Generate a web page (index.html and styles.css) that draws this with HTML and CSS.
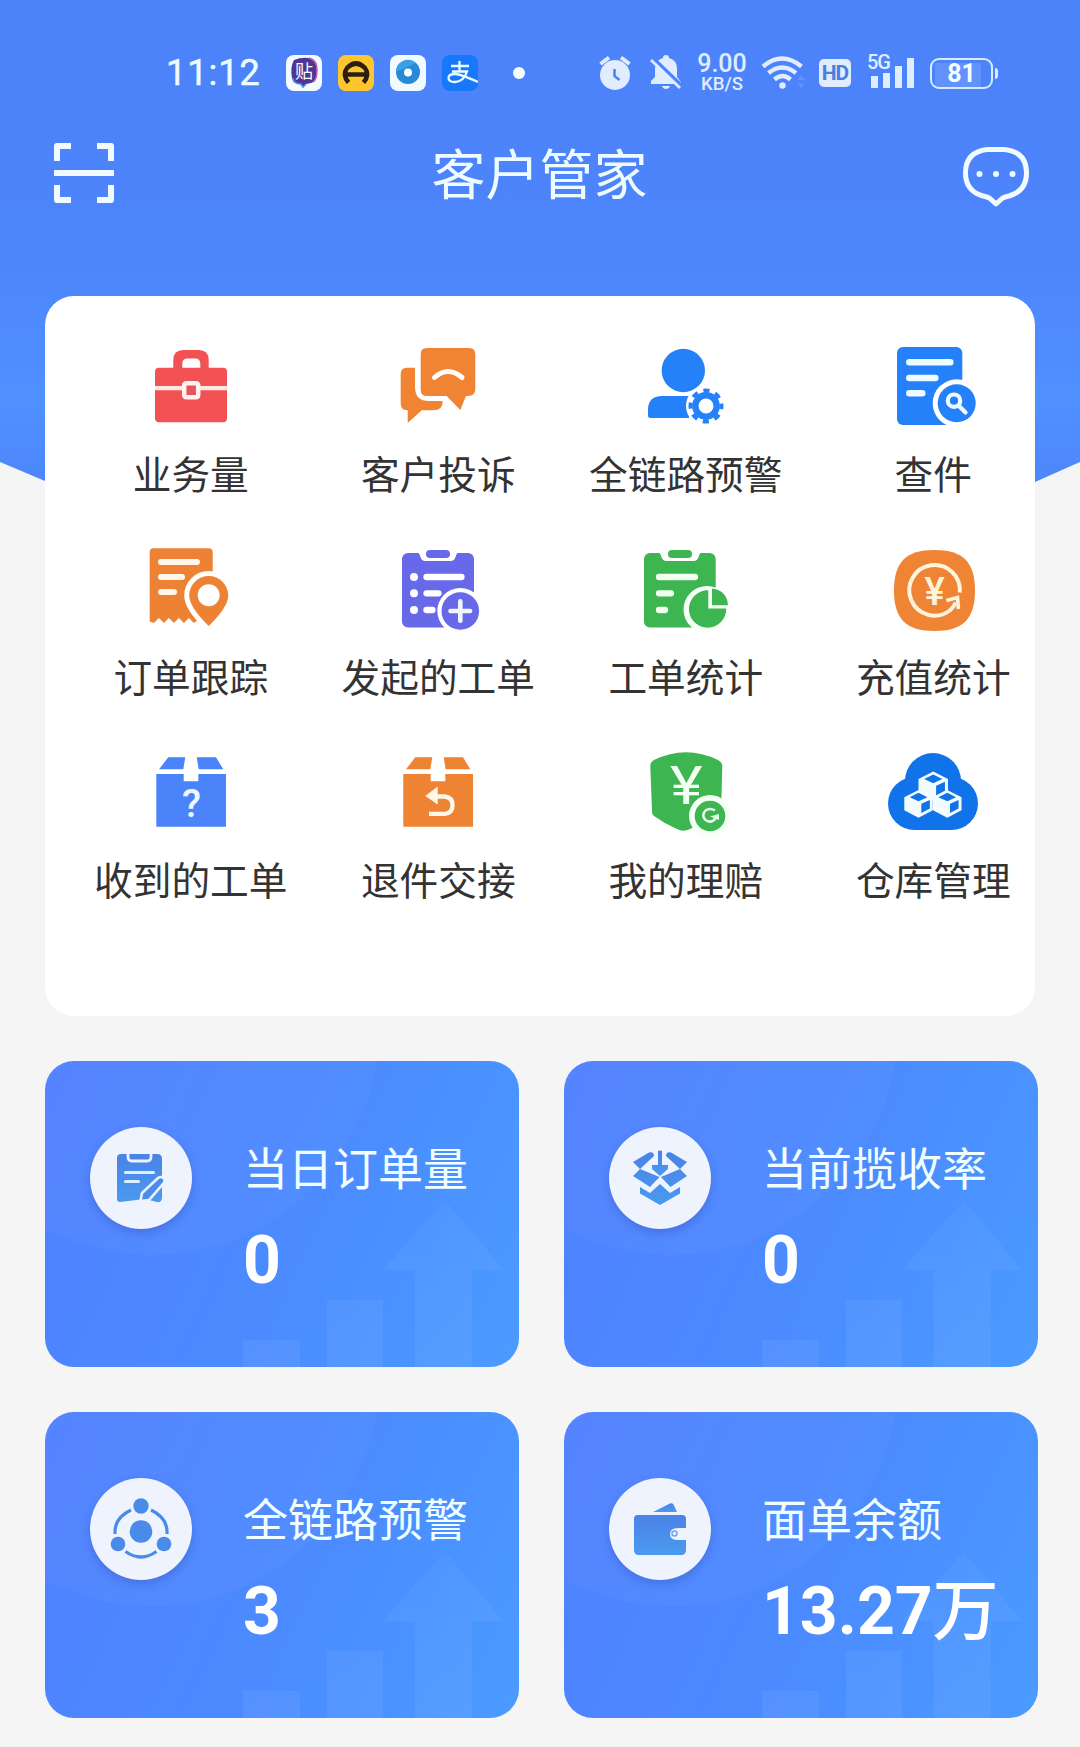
FILE: index.html
```html
<!DOCTYPE html>
<html lang="zh-CN">
<head>
    <meta charset="UTF-8">
    <meta name="viewport" content="width=device-width, initial-scale=1.0">
    <title>客户管家</title>
    <link rel="stylesheet" href="styles.css">
</head>
<body>
    <!-- shared shapes -->
    <svg class="defs" width="0" height="0">
        <defs>
            <linearGradient id="iconBlue" x1="0" y1="0" x2="0" y2="1">
                <stop offset="0" stop-color="#4b82e6"/>
                <stop offset="1" stop-color="#4a9af0"/>
            </linearGradient>
            <linearGradient id="barFade" gradientUnits="userSpaceOnUse" x1="0" y1="130" x2="0" y2="306">
                <stop offset="0" stop-color="#fff" stop-opacity="0.03"/>
                <stop offset="1" stop-color="#fff" stop-opacity="0.06"/>
            </linearGradient>
            <symbol id="card-bg" viewBox="0 0 474 306">
                <circle cx="107" cy="-33" r="227" fill="#fff" opacity="0.03"/>
                <path d="M198 306v-27h57v27zM282 306v-67h56v67zM370 306v-97h-32l62-70 58 70h-31v97z" fill="url(#barFade)"/>
            </symbol>
            <symbol id="cube" viewBox="0 0 30 30">
                <path d="M15 0.5 29.5 7.8v13.4L15 28.8 0.5 21.2V7.8z" fill="#f2fcff"/>
                <path d="M15 3.4 24 7.9 15 12 6 7.9zM17.8 14.6 26.5 10.6v8.8l-8.7 4.6z" fill="#1173e9"/>
            </symbol>
        </defs>
    </svg>

    <header class="hero">
        <div class="status-bar">
            <span class="time">11:12</span>
            <div class="apps">
                <svg width="36" height="36" viewBox="0 0 36 36">
                    <rect width="36" height="36" rx="8" fill="#f4fbff"/>
                    <path d="M8 5q10-4 18-1 6 3 5 12 0 10-6 12l-5 1-3 3-3-3q-7 0-8-6-2-11 2-18z" fill="#4d3696"/>
                    <path d="M23 3q8 2 8 12t-4 12" fill="none" stroke="#c25bb5" stroke-width="1.5"/>
                    <path d="M7 23q1 6 8 6l2 3 3-3" fill="none" stroke="#4b8be0" stroke-width="1.5"/>
                    <text x="18" y="23" class="tie">贴</text>
                </svg>
                <svg width="36" height="36" viewBox="0 0 36 36">
                    <rect width="36" height="36" rx="8" fill="#fdc62f"/>
                    <path d="M10.500 27.500Q4 20 9 13q9-9 18 0 5 7-1.500 14.500M8 19.500h20" fill="none" stroke="#2b2010" stroke-width="4.500"/>
                </svg>
                <svg width="36" height="36" viewBox="0 0 36 36">
                    <rect width="36" height="36" rx="8" fill="#f1fbff"/>
                    <circle cx="18" cy="17" r="12" fill="#2789d8"/>
                    <path d="M6 17a12 12 0 0 1 20-9z" fill="#39a0e3"/>
                    <circle cx="18" cy="17.500" r="4" fill="#fff"/>
                </svg>
                <svg width="36" height="36" viewBox="0 0 36 36">
                    <rect width="36" height="36" rx="8" fill="#1778fb"/>
                    <path d="M9 11h18M17.500 6v11M10 16.500h15q-3 10-12 10.500-6.500 0-6.500-4t6.500-4q5 0 23 8" fill="none" stroke="#eafcff" stroke-width="2.300"/>
                </svg>
            </div>
            <i class="dot"></i>
            <div class="system">
                <svg class="alarm" width="34" height="36" viewBox="0 0 34 36">
                    <circle cx="17" cy="20" r="15" fill="#e0edff"/>
                    <path d="M2.500 9 11 2.500M31.500 9 23 2.500" stroke="#e0edff" stroke-width="4"/>
                    <path d="M16.500 14v7l5 4" fill="none" stroke="#4c84fa" stroke-width="2.600"/>
                </svg>
                <svg class="bell" width="32" height="36" viewBox="0 0 32 36">
                    <path d="M13 3a3 3 0 0 1 6 0q8 2 8 11v8l4 5v2H1v-3l4-4v-8q0-9 8-11z" fill="#e0edff"/>
                    <path d="M12 31h8q-1 3-4 3t-4-3z" fill="#e0edff"/>
                    <path d="M3 3 31 30" stroke="#4c84fa" stroke-width="3.500"/>
                    <path d="M1 5 30 33" stroke="#e0edff" stroke-width="2.800"/>
                </svg>
                <div class="speed"><b>9.00</b><span>KB/S</span></div>
                <svg class="wifi" width="46" height="36" viewBox="0 0 46 36">
                    <path d="M2 11.500q19-16 38.500 0M7.500 18q13.500-11 27.500 0M13.500 24.500q8-7 16 0" fill="none" stroke="#e0edff" stroke-width="4.500"/>
                    <circle cx="21.500" cy="30.500" r="3.200" fill="#e0edff"/>
                    <path d="m36 25 4-4.500 4 4.500zM36 28.500l4 4.500 4-4.500z" fill="#6392fb"/>
                </svg>
                <span class="hd">HD</span>
                <div class="signal">
                    <svg width="48" height="34" viewBox="0 0 48 34">
                        <path d="M3 20h7v12H3zM15 17h7v15h-7zM27 10h7v22h-7zM39 2h7v30h-7z" fill="#e0edff"/>
                    </svg>
                    <span>5G</span>
                </div>
                <div class="battery"><span>81</span></div>
            </div>
        </div>

        <nav class="title-bar">
            <svg width="60" height="60" viewBox="0 0 60 60" fill="none" stroke="#f1fbff" stroke-width="6" stroke-linejoin="round">
                <path d="M3 18V3h14M43 3h14v15M57 42v15H43M17 57H3V42"/>
                <path d="M1 30h58" stroke-linecap="round"/>
            </svg>
            <h1>客户管家</h1>
            <svg class="chat" width="68" height="60" viewBox="0 0 68 60">
                <path d="M25 2.500H43Q64.500 5 64.500 26 64.500 44 47 49 42 50 40 51.500L34 57 28 51.500Q26 50 21 49 3.500 44 3.500 26 3.500 5 25 2.500z" fill="none" stroke="#f1fbff" stroke-width="5" stroke-linejoin="round"/>
                <g fill="#f1fbff"><circle cx="17.500" cy="27" r="3"/><circle cx="34" cy="27" r="3"/><circle cx="50.500" cy="27" r="3"/></g>
            </svg>
        </nav>
    </header>

    <main>
        <section class="menu">
            <a class="item">
                <svg viewBox="0 0 90 90">
                    <path d="M27.300 27V19q0-10 10-10h15.400q10 0 10 10v8h-8.400v-4q0-5.500-5-5.500h-8q-5 0-5 5.500v4z" fill="#f25253"/>
                    <rect x="9" y="26.700" width="72" height="54.500" rx="4" fill="#f25253"/>
                    <path d="M9 47.200h72" stroke="#ffe8e4" stroke-width="4.300"/>
                    <rect x="38.200" y="42.300" width="14" height="14" rx="2" fill="#e9535c" stroke="#fff3ef" stroke-width="4.500"/>
                </svg>
                <span>业务量</span>
            </a>
            <a class="item">
                <svg viewBox="0 0 90 90" fill="#f08433">
                    <path d="M14 26.700h8V46q0 14 14 14h13.700q0 9.300-9 9.300H28.700L14.700 82V69.300q-7 0-7-7V33q0-6.300 6.300-6.300z"/>
                    <path d="M34 7h42q6.300 0 6.300 6.300V48q0 7-7 7H73l-5.700 14L53.700 55H34q-6.300 0-6.300-6.300V13.300Q27.700 7 34 7z"/>
                    <path d="M41.500 36.500q13.500-12 27.500 0" fill="none" stroke="#fff" stroke-width="5" stroke-linecap="round"/>
                </svg>
                <span>客户投诉</span>
            </a>
            <a class="item">
                <svg viewBox="0 0 90 90" fill="#2581fa">
                    <circle cx="42.300" cy="29.500" r="21.700"/>
                    <path d="M21 55h27v22H9.500Q7 77 7 74.500V69q0-14 14-14z"/>
                    <circle cx="65" cy="65" r="20" fill="#fff"/>
                    <circle cx="65" cy="65" r="10.700" fill="none" stroke="#2581fa" stroke-width="6.400"/>
                    <circle cx="65" cy="65" r="15.500" fill="none" stroke="#2581fa" stroke-width="4" stroke-dasharray="6.200 5.970" stroke-dashoffset="3.100"/>
                </svg>
                <span>全链路预警</span>
            </a>
            <a class="item">
                <svg viewBox="0 0 90 90">
                    <rect x="9" y="6" width="65.300" height="78" rx="6" fill="#2581fa"/>
                    <path d="M21.300 21.300h41M21.300 37h26M21.300 52.300h13" stroke="#effcff" stroke-width="6.500" stroke-linecap="round"/>
                    <circle cx="68.700" cy="62.300" r="24" fill="#fff"/>
                    <circle cx="68.700" cy="62.300" r="19" fill="#2581fa"/>
                    <circle cx="66" cy="59.700" r="6.200" fill="none" stroke="#effcff" stroke-width="4.200"/>
                    <path d="m71 65 6.500 6.500" stroke="#effcff" stroke-width="4.300" stroke-linecap="round"/>
                </svg>
                <span>查件</span>
            </a>

            <a class="item">
                <svg viewBox="0 0 90 90">
                    <path d="M8.700 4.300h54q4 0 4 4V79h-10l-4-3.500-4.800 3.500-5-5-5 5-5-5-5 5-5-5-5 5-5-5-5 5-4.200-1.500V8.300q0-4 4-4z" fill="#ed8234"/>
                    <path d="M15 18h36M15 33h21M15 48h13" stroke="#fff8ea" stroke-width="6" stroke-linecap="round"/>
                    <path d="M62.700 82Q43.200 63 43.200 51.500a19.500 19.500 0 0 1 39 0Q82.200 63 62.700 82z" fill="#fff" stroke="#fff" stroke-width="10"/>
                    <path d="M62.700 82Q43.200 63 43.200 51.500a19.500 19.500 0 0 1 39 0Q82.200 63 62.700 82z" fill="#ed8234"/>
                    <circle cx="62.700" cy="51.300" r="11" fill="#fff"/>
                </svg>
                <span>订单跟踪</span>
            </a>
            <a class="item">
                <svg viewBox="0 0 90 90">
                    <rect x="9" y="9" width="72" height="74.500" rx="6" fill="#6869e9"/>
                    <path d="M25 8h40q-2 3-2.500 5-1 4-5 4h-25q-4 0-5-4-.5-2-2.500-5z" fill="#fff"/>
                    <rect x="33" y="6" width="24" height="8" rx="4" fill="#6869e9"/>
                    <path d="M33.500 33h35M33.500 49.300h12M33.500 66h6" stroke="#fff" stroke-width="6.300" stroke-linecap="round"/>
                    <g fill="#fff"><circle cx="21" cy="33" r="4"/><circle cx="21" cy="49.300" r="4"/><circle cx="21" cy="66" r="4"/></g>
                    <circle cx="67.300" cy="67" r="23" fill="#fff"/>
                    <circle cx="67.300" cy="67" r="18.800" fill="#6869e9"/>
                    <path d="M57.500 67h19.600M67.300 57.200v19.600" stroke="#f4f4ff" stroke-width="4.600" stroke-linecap="round"/>
                </svg>
                <span>发起的工单</span>
            </a>
            <a class="item">
                <svg viewBox="0 0 90 90">
                    <rect x="3" y="9" width="71.700" height="74.500" rx="6" fill="#3db551"/>
                    <path d="M18 8h42q-2 3-2.500 5-1 4-5 4H25.500q-4 0-5-4-.5-2-2.500-5z" fill="#fff"/>
                    <rect x="27" y="6" width="24" height="8" rx="4" fill="#3db551"/>
                    <path d="M18 33h36M18 49.300h12M18 66h6" stroke="#f0fff0" stroke-width="6.300" stroke-linecap="round"/>
                    <circle cx="66" cy="65.500" r="23.500" fill="#f8fff8"/>
                    <path d="M67.300 46.300V64.600H85.300A18.700 18.700 0 1 1 67.300 46.300z" fill="#3db551"/>
                    <path d="M71 44.500q15 2 16 16.800H71z" fill="#3db551"/>
                </svg>
                <span>工单统计</span>
            </a>
            <a class="item">
                <svg viewBox="0 0 90 90">
                    <path d="M46.500 6C75 6 87 18 87 46.500S75 87 46.500 87 6 75 6 46.500 18 6 46.500 6z" fill="#ef8435"/>
                    <path d="M71.800 48.500a25.300 25.300 0 1 0-10 18q4-3.500 6-8" fill="none" stroke="#fff3dc" stroke-width="4"/>
                    <path d="M58.500 56.500 69.500 53.500 70.500 65" fill="none" stroke="#fff3dc" stroke-width="3.600"/>
                    <text transform="translate(46.500 60.500)" class="yen small">¥</text>
                </svg>
                <span>充值统计</span>
            </a>

            <a class="item">
                <svg viewBox="0 0 90 90" fill="#4b84fa">
                    <path d="M22.300 10.300h17l-2 12H13zM50.700 10.300H70l7.300 12H52.700zM10.300 27h27.400v7.300h14.600V27H80v52.700H10.300z"/>
                    <text x="45.500" y="70" class="question">?</text>
                </svg>
                <span>收到的工单</span>
            </a>
            <a class="item">
                <svg viewBox="0 0 90 90" fill="#ee8334">
                    <path d="M22.300 10.300h17l-2 12H13zM50.700 10.300H70l7.300 12H52.700zM10.300 27h27.400v7.300h14.600V27H80v52.700H10.300z"/>
                    <path d="M32.300 49 44.700 39.500v18z" fill="#fff7ea"/>
                    <path d="M43 49.500h9q7.500 1 7.500 8.800t-7.500 8.500H36" fill="none" stroke="#fff7ea" stroke-width="4.300"/>
                </svg>
                <span>退件交接</span>
            </a>
            <a class="item">
                <svg viewBox="0 0 90 90">
                    <path d="M13 13Q45-2.500 77 13q4.500 2.500 4.300 6L80 66q-6 5-31 16-7 3.500-13 0Q24 77 13 69q-2-1-2-5L9.300 19q0-4 3.700-6z" fill="#3db551"/>
                    <circle cx="69" cy="69" r="21" fill="#f6fff6"/>
                    <circle cx="69" cy="69" r="15.300" fill="#3db551"/>
                    <path d="M74 63.500q-5-3-9.500 0-4.500 5 0 9.500 6 4 10.500-2" fill="none" stroke="#e4ffe8" stroke-width="2.500"/>
                    <path d="M69 69.500 78 67v6z" fill="#e4ffe8"/>
                    <text transform="translate(45.300 57) scale(1.150 1)" class="yen">¥</text>
                </svg>
                <span>我的理赔</span>
            </a>
            <a class="item">
                <svg viewBox="0 0 90 90">
                    <g fill="#1173e9">
                        <circle cx="45" cy="34" r="28"/>
                        <circle cx="26.500" cy="56.500" r="26.500"/>
                        <circle cx="63.500" cy="56.500" r="26.500"/>
                        <rect x="26" y="50" width="38" height="33"/>
                    </g>
                    <use href="#cube" x="30" y="24" width="30.500" height="30.500"/>
                    <use href="#cube" x="15.800" y="42.500" width="29.500" height="29.500"/>
                    <use href="#cube" x="44.500" y="42.500" width="29.500" height="29.500"/>
                </svg>
                <span>仓库管理</span>
            </a>
        </section>

        <section class="stats">
            <div class="card">
                <svg class="deco"><use href="#card-bg"/></svg>
                <div class="badge">
                    <svg viewBox="0 0 102 102">
                        <path d="M31 27h36q5 0 5 5v38q0 6-5 5l-12-3-25 3q-3 0-3-3V31q0-4 4-4z" fill="url(#iconBlue)"/>
                        <path d="M38 25v5q0 4 4 4h15q4 0 4-4v-5" fill="none" stroke="#edf2ff" stroke-width="2.800"/>
                        <path d="M35.500 45.500h28M35.500 54.500h13" stroke="#d9f0ff" stroke-width="3.200" stroke-linecap="round"/>
                        <path d="m52 66 16-15q3-2 5.500 0 2.500 3 0 5.500L59 73l-8.500 1z" fill="#4a8eeb" stroke="#edf2ff" stroke-width="2.600"/>
                    </svg>
                </div>
                <div class="info"><h2>当日订单量</h2><strong>0</strong></div>
            </div>
            <div class="card">
                <svg class="deco"><use href="#card-bg"/></svg>
                <div class="badge">
                    <svg viewBox="0 0 102 102" fill="url(#iconBlue)">
                        <path d="M24 35 40 25.500Q45 24 45 29L31 42zM78 35 62 25.500Q57 24 57 29l14 13zM31 42l-7 7 17 11 9.500-10zM71 42l7 7-16.500 11L52 50zM31 60l10 6 10-9 10 9 10-6v6.500L51 78 31 66.500z"/>
                        <path d="M49 24q2-1 4 0v14h6v4l-8 7-8-7v-4h6z"/>
                    </svg>
                </div>
                <div class="info"><h2>当前揽收率</h2><strong>0</strong></div>
            </div>
            <div class="card">
                <svg class="deco"><use href="#card-bg"/></svg>
                <div class="badge">
                    <svg viewBox="0 0 102 102">
                        <g fill="#4a8bea"><circle cx="51" cy="28" r="7.700"/><circle cx="51" cy="53.500" r="11.300"/><circle cx="28" cy="66" r="7.300"/><circle cx="74" cy="66" r="7.300"/></g>
                        <path d="M41 32Q24 40 25 56M61 32Q78 40 77 56M35.500 73.500q15.500 11 31 0" fill="none" stroke="#4a8bea" stroke-width="3.200"/>
                    </svg>
                </div>
                <div class="info"><h2>全链路预警</h2><strong>3</strong></div>
            </div>
            <div class="card">
                <svg class="deco"><use href="#card-bg"/></svg>
                <div class="badge">
                    <svg viewBox="0 0 102 102" fill="url(#iconBlue)">
                        <path d="M44 34 61 25.500q3-1 4 2L68 34z"/>
                        <path d="M29 37h44q4 0 4 4v9h-8q-8 0-8 6t8 6h8v10q0 5-5 5H30q-5 0-5-5V41q0-4 4-4z"/>
                        <circle cx="65.500" cy="55.500" r="2.500" fill="none" stroke="#6fa5ef" stroke-width="1.500"/>
                    </svg>
                </div>
                <div class="info"><h2>面单余额</h2><strong>13.27<em>万</em></strong></div>
            </div>
        </section>
    </main>
</body>
</html>
```

FILE: styles.css
```css
* {
    box-sizing: border-box;
}

body {
    margin: 0;
    width: 1080px;
    height: 1747px;
    overflow: hidden;
    background: #f5f5f6;
    color: #333;
    font-family: Roboto, "Noto Sans CJK SC", sans-serif;
}

svg {
    display: block;
    flex-shrink: 0;
}

.defs {
    position: absolute;
}

/* header */
.hero {
    height: 540px;
    padding-top: 50px;
    background: linear-gradient(#4c83fb 0, #4c84fb 240px, #5090ff 400px, #4d87fb 480px);
    clip-path: polygon(0 0, 100% 0, 100% 462px, 1035px 482px, 540px 540px, 45px 481px, 0 462px);
}

.status-bar {
    display: flex;
    align-items: center;
    height: 46px;
    padding: 0 83px 0 166px;
    color: #e0edff;
}

.time {
    width: 120px;
    font-size: 36px;
    letter-spacing: 1px;
    color: #effcff;
    -webkit-text-stroke: 0.5px #effcff;
}

.apps {
    display: flex;
    gap: 16px;
}

.tie {
    font-size: 18px;
    font-weight: 400;
    fill: #fff;
    text-anchor: middle;
}

.dot {
    width: 12px;
    height: 12px;
    margin-left: 35px;
    border-radius: 50%;
    background: #f6ffff;
}

.system {
    display: flex;
    align-items: center;
    margin-left: 73px;
}

.bell {
    margin-left: 18px;
}

.speed {
    display: flex;
    flex-direction: column;
    align-items: center;
    width: 52px;
    margin-left: 14px;
}

.speed b {
    font-size: 25px;
    font-weight: 500;
    line-height: 23px;
}

.speed span {
    font-size: 18.500px;
    font-weight: 500;
    line-height: 19px;
}

.wifi {
    margin-left: 13px;
}

.hd {
    width: 32px;
    height: 28px;
    margin-left: 12px;
    border-radius: 5px;
    background: #e0edff;
    color: #4c7de0;
    font-size: 21px;
    font-weight: 700;
    line-height: 29px;
    letter-spacing: -1px;
    text-align: center;
}

.signal {
    position: relative;
    margin-left: 17px;
}

.signal span {
    position: absolute;
    left: -1px;
    top: -3px;
    padding-right: 1px;
    background: #4c84fb;
    font-size: 20px;
    font-weight: 500;
    line-height: 19px;
    letter-spacing: -1px;
}

.battery {
    position: relative;
    width: 63px;
    height: 31px;
    margin-left: 14px;
    border: 2.500px solid #d7edff;
    border-radius: 9px;
    background: linear-gradient(90deg, #6293fc 46px, transparent 46px) 3px 3px no-repeat;
    color: #f4ffff;
    font-size: 25px;
    font-weight: 700;
    line-height: 27px;
    text-align: center;
}

.battery::after {
    content: "";
    position: absolute;
    right: -7px;
    top: 8px;
    width: 3px;
    height: 11px;
    border-radius: 0 3px 3px 0;
    background: #d7edff;
}

.title-bar {
    display: flex;
    align-items: center;
    justify-content: space-between;
    height: 70px;
    margin-top: 42px;
    padding: 0 50px 0 54px;
}

h1 {
    margin: 8px 0 0 3px;
    color: #effcff;
    font-size: 54px;
    font-weight: 400;
    line-height: 70px;
}

.chat {
    margin-top: 8px;
}

/* shortcut grid, the last column runs close to the edge */
.menu {
    display: grid;
    grid-template-columns: repeat(4, 247.500px);
    grid-auto-rows: 203px;
    width: 990px;
    height: 720px;
    margin: -244px 45px 0;
    padding: 45px 0 0 22px;
    overflow: hidden;
    position: relative;
    border-radius: 29px;
    background: #fff;
}

.item {
    display: flex;
    flex-direction: column;
    align-items: center;
}

.item svg {
    width: 90px;
    height: 90px;
}

.item span {
    margin-top: 20px;
    font-size: 38.700px;
    line-height: 50px;
    white-space: nowrap;
}

.yen,
.question {
    text-anchor: middle;
    fill: #f4fff4;
    font-size: 54px;
}

.yen.small {
    fill: #fff3dc;
    font-size: 38px;
    font-weight: 500;
}

.question {
    fill: #eff8ff;
    font-size: 39px;
    font-weight: 500;
}

/* statistics */
.stats {
    display: grid;
    grid-template-columns: 474px 474px;
    grid-auto-rows: 306px;
    gap: 45px;
    margin: 45px 0 0 45px;
}

.card {
    position: relative;
    display: flex;
    padding: 66px 0 0 45px;
    border-radius: 29px;
    overflow: hidden;
    background: linear-gradient(115deg, #5080ff 0%, #4b8bff 55%, #4a9bff 100%);
    color: #f1ffff;
}

.deco {
    position: absolute;
    left: 0;
    top: 0;
    width: 474px;
    height: 306px;
}

.badge {
    position: relative;
    width: 102px;
    height: 102px;
    border-radius: 50%;
    background: #eff3fe;
    box-shadow: 0 4px 9px rgba(50, 80, 180, 0.4);
}

.info {
    position: relative;
    margin-left: 51px;
    padding-top: 14px;
}

h2 {
    margin: 0;
    font-size: 45px;
    font-weight: 400;
    line-height: 60px;
}

strong {
    display: block;
    margin-top: 21px;
    color: #fff;
    font-size: 66px;
    line-height: 78px;
    white-space: nowrap;
}

strong em {
    font-style: normal;
    font-weight: 500;
}
```
